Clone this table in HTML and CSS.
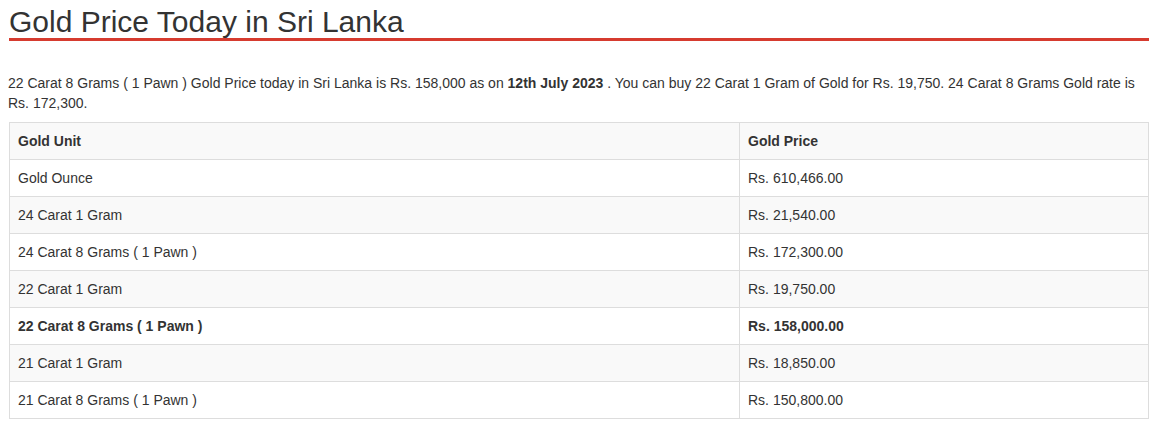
FILE: index.html
```html
<!DOCTYPE html>
<html lang="en">
<head>
<meta charset="utf-8">
<title>Gold Price Today in Sri Lanka</title>
<link rel="stylesheet" href="styles.css">
</head>
<body>
<div class="page">
  <h2 class="title">Gold Price Today in Sri Lanka</h2>
  <p class="intro">22 Carat 8 Grams ( 1 Pawn ) Gold Price today in Sri Lanka is Rs. 158,000 as on <strong>12th July 2023</strong> . You can buy 22 Carat 1 Gram of Gold for Rs. 19,750. 24 Carat 8 Grams Gold rate is Rs. 172,300.</p>
  <table class="prices">
    <tbody>
      <tr class="head"><td class="unit">Gold Unit</td><td>Gold Price</td></tr>
      <tr><td class="unit">Gold Ounce</td><td>Rs. 610,466.00</td></tr>
      <tr><td class="unit">24 Carat 1 Gram</td><td>Rs. 21,540.00</td></tr>
      <tr><td class="unit">24 Carat 8 Grams ( 1 Pawn )</td><td>Rs. 172,300.00</td></tr>
      <tr><td class="unit">22 Carat 1 Gram</td><td>Rs. 19,750.00</td></tr>
      <tr class="hl"><td class="unit">22 Carat 8 Grams ( 1 Pawn )</td><td>Rs. 158,000.00</td></tr>
      <tr><td class="unit">21 Carat 1 Gram</td><td>Rs. 18,850.00</td></tr>
      <tr><td class="unit">21 Carat 8 Grams ( 1 Pawn )</td><td>Rs. 150,800.00</td></tr>
    </tbody>
  </table>
</div>
</body>
</html>
```
FILE: styles.css
```css
html, body {
  margin: 0;
  padding: 0;
  background: #fff;
}
body {
  font-family: "Liberation Sans", Arial, sans-serif;
  font-size: 14px;
  line-height: 20px;
  color: #333;
}
.page {
  width: 1140px;
  margin-left: 9px;
}
.title {
  margin: 5px 0 0 0;
  padding: 0;
  font-size: 30px;
  font-weight: normal;
  line-height: 33px;
  color: #333;
  border-bottom: 3px solid #d63b2f;
}
.intro {
  margin: 32px 0 9px -1px;
}
.intro strong {
  font-weight: bold;
}
.prices {
  width: 1140px;
  border-collapse: collapse;
  border-spacing: 0;
  border: 1px solid #ddd;
}
.prices td {
  padding: 8px;
  line-height: 20px;
  border: 1px solid #ddd;
  vertical-align: top;
  text-align: left;
}
.prices td.unit {
  width: 713px;
}
.prices tr:nth-child(odd) {
  background: #f9f9f9;
}
.prices tr.head td,
.prices tr.hl td {
  font-weight: bold;
}
```
